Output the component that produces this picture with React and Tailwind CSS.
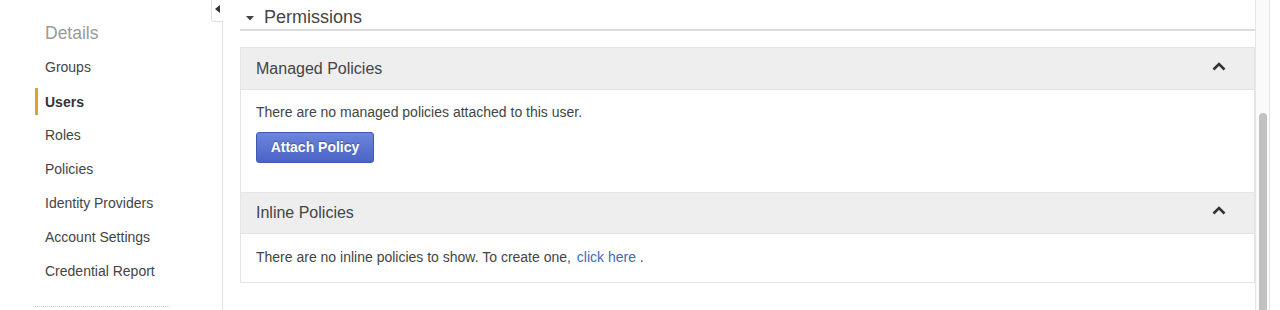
export default function App() {
  const items = ["Groups", "Users", "Roles", "Policies", "Identity Providers", "Account Settings", "Credential Report"];

  return (
    <div className="flex h-[310px] w-[1280px] overflow-hidden bg-white font-['Liberation_Sans',Arial,sans-serif] text-[#444]">
      {/* sidebar */}
      <aside className="relative w-[223px] shrink-0 border-r border-[#e3e3e3] pt-[22px]">
        <div className="absolute right-[-1px] top-0 flex h-[22px] w-[12px] items-start justify-center rounded-bl-[4px] border-b border-l border-[#e0e0e0] bg-white pt-[5px]">
          <svg width="5" height="8" viewBox="0 0 5 8">
            <polygon points="5,0 5,8 0,4" fill="#333" />
          </svg>
        </div>
        <div className="pl-[45px] text-[17.5px] leading-[22px] text-[#9a9a9a]">Details</div>
        <nav className="mt-[10px] flex flex-col gap-[7px] pl-[35px]">
          {items.map((it) => (
            <a
              key={it}
              className={
                "flex h-[27px] items-center border-l-[3px] pl-[7px] text-[14px] " +
                (it === "Users" ? "border-[#e0a232] pt-[1px] font-bold text-[#333]" : "border-transparent")
              }
            >
              {it}
            </a>
          ))}
        </nav>
        <div className="ml-[35px] mt-[21px] w-[135px] border-t border-dotted border-[#cfcfcf]" />
      </aside>

      {/* main */}
      <main className="flex-1 pl-[17px]">
        <div className="flex h-[31px] items-start gap-[10px] border-b-2 border-[#dcdcdc] pl-[6px] pt-[6px]">
          <svg width="8" height="5" viewBox="0 0 8 5" className="mt-[10px]">
            <polygon points="0,0 8,0 4,4.5" fill="#444" />
          </svg>
          <span className="text-[18px] leading-[23px] text-[#444]">Permissions</span>
        </div>

        <section className="mt-[16px] border border-[#e4e4e4]">
          <div className="flex h-[42px] items-center justify-between border-b border-[#e4e4e4] bg-[#eeeeee] pl-[15px] pr-[28px]">
            <span className="text-[16px]">Managed Policies</span>
            <Chevron />
          </div>
          <div className="px-[15px] pb-[29px] pt-[12px]">
            <p className="text-[14px] leading-[20px]">There are no managed policies attached to this user.</p>
            <button className="mt-[10px] h-[31px] w-[118px] rounded-[3px] border border-[#3f58b3] bg-gradient-to-b from-[#6c86dd] to-[#4a63c6] text-[14px] font-bold text-white [text-shadow:0_-1px_1px_rgba(0,0,0,0.3)]">
              Attach Policy
            </button>
          </div>
          <div className="flex h-[42px] items-center justify-between border-y border-[#e4e4e4] bg-[#eeeeee] pl-[15px] pr-[28px]">
            <span className="text-[16px]">Inline Policies</span>
            <Chevron />
          </div>
          <div className="px-[15px] pb-[15px] pt-[13px]">
            <p className="text-[14px] leading-[20px]">
              There are no inline policies to show. To create one,{" "}
              <a className="ml-[2px] text-[#4469b8]">click here</a> .
            </p>
          </div>
        </section>
      </main>

      {/* scrollbar */}
      <div className="flex w-[25px] shrink-0">
        <div className="flex h-full w-[15px] flex-col border-x border-[#e6e6e6] bg-[#fafafa] pl-[3px]">
          <div className="mt-[113px] w-[8px] flex-1 rounded-t-full bg-[#c1c1c1]" />
        </div>
      </div>
    </div>
  );
}

function Chevron() {
  return (
    <svg width="14" height="9" viewBox="0 0 14 9" className="mb-[5px]">
      <polyline points="1.5,7.5 7,2 12.5,7.5" fill="none" stroke="#333" strokeWidth="2.6" />
    </svg>
  );
}
